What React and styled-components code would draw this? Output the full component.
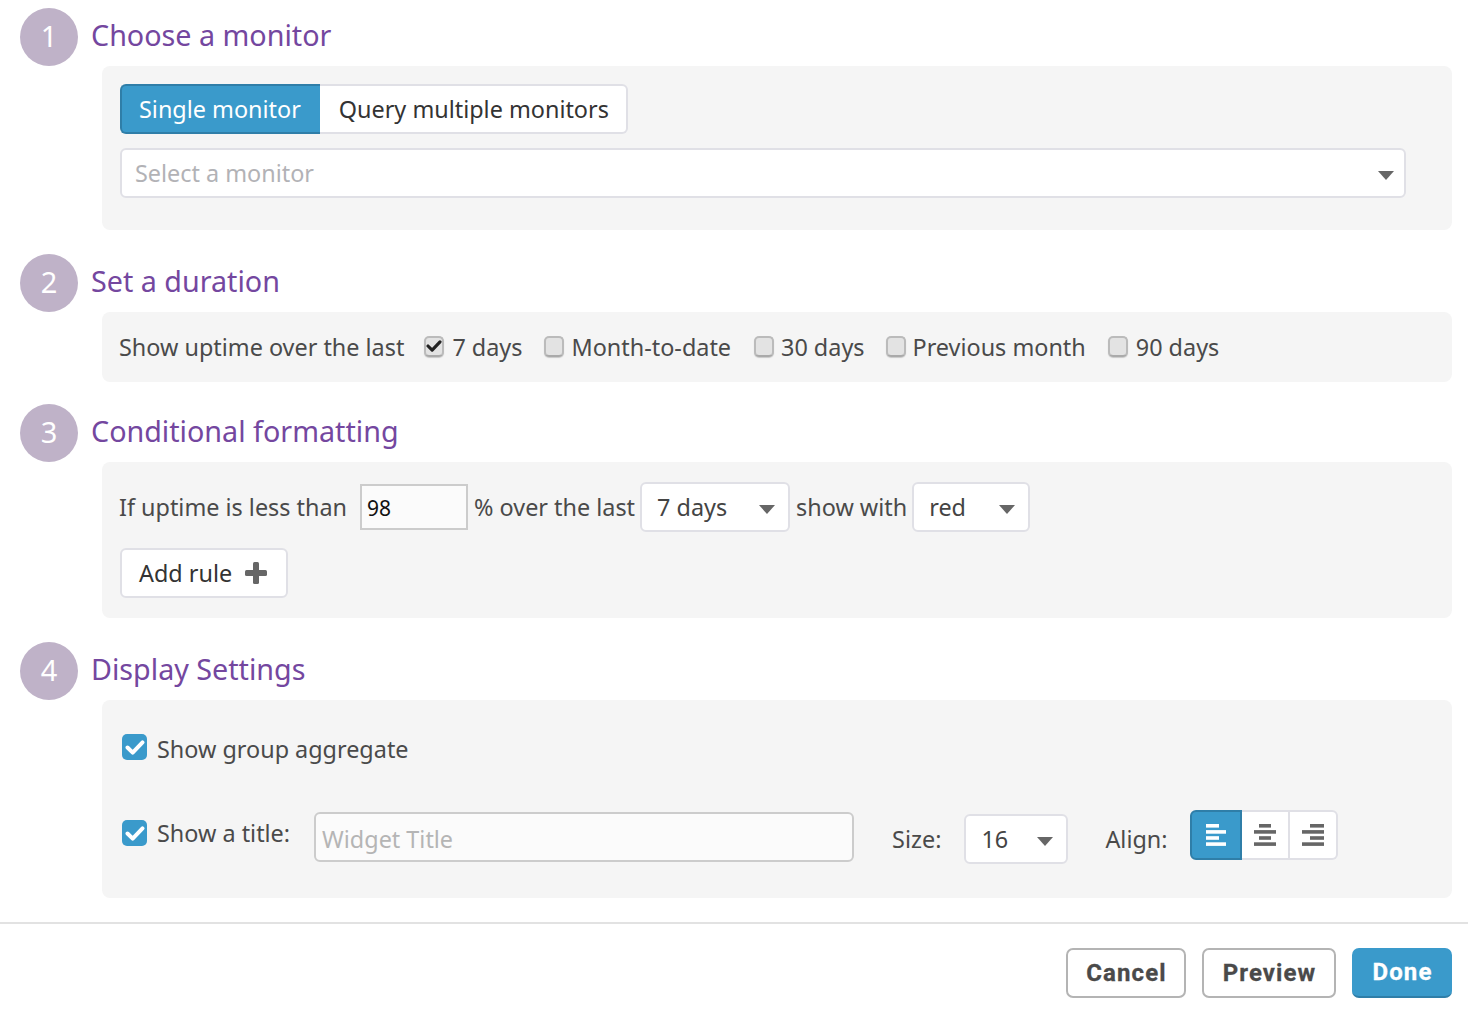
import React from 'react';
import styled, { createGlobalStyle } from 'styled-components';

const GlobalStyle = createGlobalStyle`
  html, body {
    margin: 0;
    background: #fff;
    font-family: 'Noto Sans', sans-serif;
    color: #444;
  }
  * {
    box-sizing: border-box;
  }
`;

const Page = styled.div`
  width: 1468px;
  height: 1014px;
  padding-top: 8px;
  overflow: hidden;
`;

const Section = styled.section`
  padding: 0 16px 0 20px;
  margin-bottom: ${(p) => p.$gap}px;
`;

const StepHeader = styled.div`
  display: flex;
  align-items: center;
  height: 58px;
`;

const StepNumber = styled.div`
  width: 58px;
  height: 58px;
  border-radius: 50%;
  background: #bfb2c8;
  color: #fff;
  font-size: 29px;
  line-height: 56px;
  text-align: center;
`;

const StepTitle = styled.h2`
  margin: 0 0 4px 13px;
  font-size: 28.7px;
  font-weight: 400;
  line-height: 40px;
  color: #74479f;
`;

const Panel = styled.div`
  margin-left: 82px;
  background: #f5f5f5;
  border-radius: 8px;
  padding: ${(p) => p.$padding};
`;

const ButtonGroup = styled.div`
  display: flex;
`;

const ToggleButton = styled.div`
  height: 50px;
  padding: ${(p) => (p.$active ? '0 19px 0 17px' : '0 17px 0 19px')};
  display: flex;
  align-items: center;
  font-size: 23.4px;
  white-space: nowrap;
  background: ${(p) => (p.$active ? '#3a9acb' : '#fff')};
  color: ${(p) => (p.$active ? '#fff' : '#333')};
  border: 2px solid ${(p) => (p.$active ? '#2f7ea8' : '#e0e0e6')};
  border-left-width: ${(p) => (p.$active ? 2 : 0)}px;
  border-right-width: ${(p) => (p.$active ? 0 : 2)}px;
  border-radius: ${(p) => (p.$active ? '6px 0 0 6px' : '0 6px 6px 0')};
`;

const SelectBox = styled.div`
  display: flex;
  align-items: center;
  justify-content: space-between;
  flex: none;
  width: ${(p) => p.$width}px;
  height: 50px;
  padding: ${(p) => (p.$placeholder ? '0 10px 0 13px' : '0 13px 0 15px')};
  background: #fff;
  border: 2px solid #e0e0e6;
  border-radius: 6px;
  font-size: 23.4px;
  color: ${(p) => (p.$placeholder ? '#b2b2b6' : '#444')};
  margin: ${(p) => p.$margin || 0};
`;

const Caret = styled.span`
  width: 0;
  height: 0;
  margin-top: 4px;
  border-left: 8px solid transparent;
  border-right: 8px solid transparent;
  border-top: 9px solid #666;
`;

const Row = styled.div`
  display: flex;
  align-items: center;
  margin: ${(p) => p.$margin || 0};
  height: ${(p) => p.$height}px;
`;

const Label = styled.span`
  font-size: 23.4px;
  line-height: 32px;
  color: #4a4a4a;
  white-space: nowrap;
  margin: ${(p) => p.$margin || 0};
`;

const NativeBox = styled.span`
  display: flex;
  align-items: center;
  justify-content: center;
  flex: none;
  width: 20px;
  height: 21px;
  margin: 0 ${(p) => p.$after}px 2px ${(p) => p.$left}px;
  border: 2px solid #bbb;
  border-bottom-color: #aaa;
  border-radius: 5px;
  background: #e3e3e3;
  box-shadow: 0 1px 1px rgba(0, 0, 0, 0.18);
  color: #222;
`;

const NumberInput = styled.div`
  flex: none;
  width: 108px;
  height: 46px;
  margin: 0 6px 0 13px;
  padding-left: 5px;
  background: #fbfbfb;
  border: 2px solid #ccc;
  font-size: 21px;
  line-height: 44px;
  color: #111;
`;

const AddButton = styled.div`
  display: flex;
  align-items: center;
  width: 168px;
  height: 50px;
  margin-left: 18px;
  padding-left: 17px;
  background: #fff;
  border: 2px solid #e0e0e6;
  border-radius: 6px;
  font-size: 23.4px;
  color: #333;
  svg {
    margin-left: 13px;
  }
`;

const CheckTile = styled.span`
  display: flex;
  align-items: center;
  justify-content: center;
  flex: none;
  width: 25px;
  height: 26px;
  margin: 0 10px 4px 0;
  border-radius: 5px;
  background: #3a9acb;
  color: #fff;
`;

const TitleInput = styled.div`
  flex: none;
  width: 540px;
  height: 50px;
  margin: 4px 38px 0 24px;
  padding-left: 6px;
  background: #fbfbfb;
  border: 2px solid #ccc;
  border-radius: 6px;
  font-size: 23.4px;
  line-height: 50px;
  color: #b5b5b5;
`;

const AlignGroup = styled.div`
  display: flex;
  height: 50px;
  margin-left: 22px;
`;

const AlignButton = styled.div`
  display: flex;
  align-items: center;
  justify-content: center;
  width: ${(p) => p.$width}px;
  background: ${(p) => (p.$active ? '#3a9acb' : '#fff')};
  color: ${(p) => (p.$active ? '#fff' : '#666')};
  border: 2px solid ${(p) => (p.$active ? '#2f7ea8' : '#e0e0e6')};
  border-left-width: ${(p) => (p.$active ? 2 : 0)}px;
  border-radius: ${(p) => p.$radius};
`;

const Divider = styled.hr`
  margin: 0;
  border: 0;
  border-top: 2px solid #e2e2e2;
`;

const Footer = styled.div`
  display: flex;
  justify-content: flex-end;
  gap: 16px;
  padding: 24px 16px 0 0;
`;

const FooterButton = styled.div`
  display: flex;
  align-items: center;
  justify-content: center;
  width: ${(p) => p.$width}px;
  height: 50px;
  padding-left: 1px;
  border-radius: 7px;
  font-family: Roboto, sans-serif;
  font-size: 24px;
  font-weight: 700;
  letter-spacing: 1.1px;
  -webkit-text-stroke: 0.3px currentColor;
  background: ${(p) => (p.$primary ? '#3a9acb' : '#fff')};
  color: ${(p) => (p.$primary ? '#fff' : '#4a4a4a')};
  border: ${(p) => (p.$primary ? '0' : '2px solid #b4b4b4')};
  border-bottom: ${(p) => (p.$primary ? '2px solid #2f7ea8' : '2px solid #b4b4b4')};
`;

const CheckMark = ({ width, height, weight }) => (
  <svg width={width} height={height} viewBox="0 0 17 13" fill="none" stroke="currentColor" strokeWidth={weight} strokeLinecap="round" strokeLinejoin="round">
    <polyline points="2,6.5 6.5,11 15,2" />
  </svg>
);

const PlusIcon = () => (
  <svg width="22" height="22" viewBox="0 0 22 22" fill="#666">
    <rect x="8" y="0" width="6" height="22" rx="1.5" />
    <rect x="0" y="8" width="22" height="6" rx="1.5" />
  </svg>
);

// bars of the align icons, [x, width] from the top down
const alignBars = {
  left: [[0, 13], [0, 20], [0, 13], [0, 20]],
  center: [[5, 12], [0, 22], [5, 12], [0, 22]],
  right: [[8, 14], [0, 22], [8, 14], [0, 22]],
};

const AlignIcon = ({ type }) => (
  <svg width={type === 'left' ? 20 : 22} height="22" viewBox={`0 0 ${type === 'left' ? 20 : 22} 22`} fill="currentColor">
    {alignBars[type].map(([x, w], i) => (
      <rect key={i} x={x} y={i * 6.1} width={w} height="3.6" />
    ))}
  </svg>
);

const durations = [
  { label: '7 days', checked: true, left: 20, after: 8 },
  { label: 'Month-to-date', left: 21, after: 8 },
  { label: '30 days', left: 23, after: 7 },
  { label: 'Previous month', left: 21, after: 7 },
  { label: '90 days', left: 22, after: 8 },
];

const Step = ({ n, title, gap, children }) => (
  <Section $gap={gap}>
    <StepHeader>
      <StepNumber>{n}</StepNumber>
      <StepTitle>{title}</StepTitle>
    </StepHeader>
    {children}
  </Section>
);

export default function App() {
  return (
    <Page>
      <GlobalStyle />
      <Step n="1" title="Choose a monitor" gap={24}>
        <Panel $padding="18px 18px 32px">
          <ButtonGroup>
            <ToggleButton $active>Single monitor</ToggleButton>
            <ToggleButton>Query multiple monitors</ToggleButton>
          </ButtonGroup>
          <SelectBox $width={1286} $margin="14px 0 0" $placeholder>
            Select a monitor
            <Caret />
          </SelectBox>
        </Panel>
      </Step>

      <Step n="2" title="Set a duration" gap={22}>
        <Panel $padding="0 17px">
          <Row $height={70}>
            <Label>Show uptime over the last</Label>
            {durations.map((d) => (
              <React.Fragment key={d.label}>
                <NativeBox $left={d.left} $after={d.after}>
                  {d.checked && <CheckMark width={16} height={12} weight={3.4} />}
                </NativeBox>
                <Label>{d.label}</Label>
              </React.Fragment>
            ))}
          </Row>
        </Panel>
      </Step>

      <Step n="3" title="Conditional formatting" gap={24}>
        <Panel $padding="20px 17px 20px 0">
          <Row $height={50}>
            <Label $margin="0 0 0 17px">If uptime is less than</Label>
            <NumberInput>98</NumberInput>
            <Label>% over the last</Label>
            <SelectBox $width={150} $margin="0 6px 0 5px">
              7 days
              <Caret />
            </SelectBox>
            <Label>show with</Label>
            <SelectBox $width={118} $margin="0 0 0 5px">
              red
              <Caret />
            </SelectBox>
          </Row>
          <Row $height={50} $margin="16px 0 0">
            <AddButton>
              Add rule
              <PlusIcon />
            </AddButton>
          </Row>
        </Panel>
      </Step>

      <Step n="4" title="Display Settings" gap={24}>
        <Panel $padding="28px 20px 38px">
          <Row $height={42}>
            <CheckTile>
              <CheckMark width={20} height={15} weight={3.4} />
            </CheckTile>
            <Label>Show group aggregate</Label>
          </Row>
          <Row $height={50} $margin="40px 0 0">
            <CheckTile>
              <CheckMark width={20} height={15} weight={3.4} />
            </CheckTile>
            <Label $margin="0 0 4px">Show a title:</Label>
            <TitleInput>Widget Title</TitleInput>
            <Label $margin="7px 0 0">Size:</Label>
            <SelectBox $width={104} $margin="8px 0 0 23px">
              16
              <Caret />
            </SelectBox>
            <Label $margin="7px 0 0 37px">Align:</Label>
            <AlignGroup>
              <AlignButton $active $width={52} $radius="6px 0 0 6px">
                <AlignIcon type="left" />
              </AlignButton>
              <AlignButton $width={48} $radius="0">
                <AlignIcon type="center" />
              </AlignButton>
              <AlignButton $width={48} $radius="0 6px 6px 0">
                <AlignIcon type="right" />
              </AlignButton>
            </AlignGroup>
          </Row>
        </Panel>
      </Step>

      <Divider />
      <Footer>
        <FooterButton $width={120}>Cancel</FooterButton>
        <FooterButton $width={134}>Preview</FooterButton>
        <FooterButton $width={100} $primary>
          Done
        </FooterButton>
      </Footer>
    </Page>
  );
}
